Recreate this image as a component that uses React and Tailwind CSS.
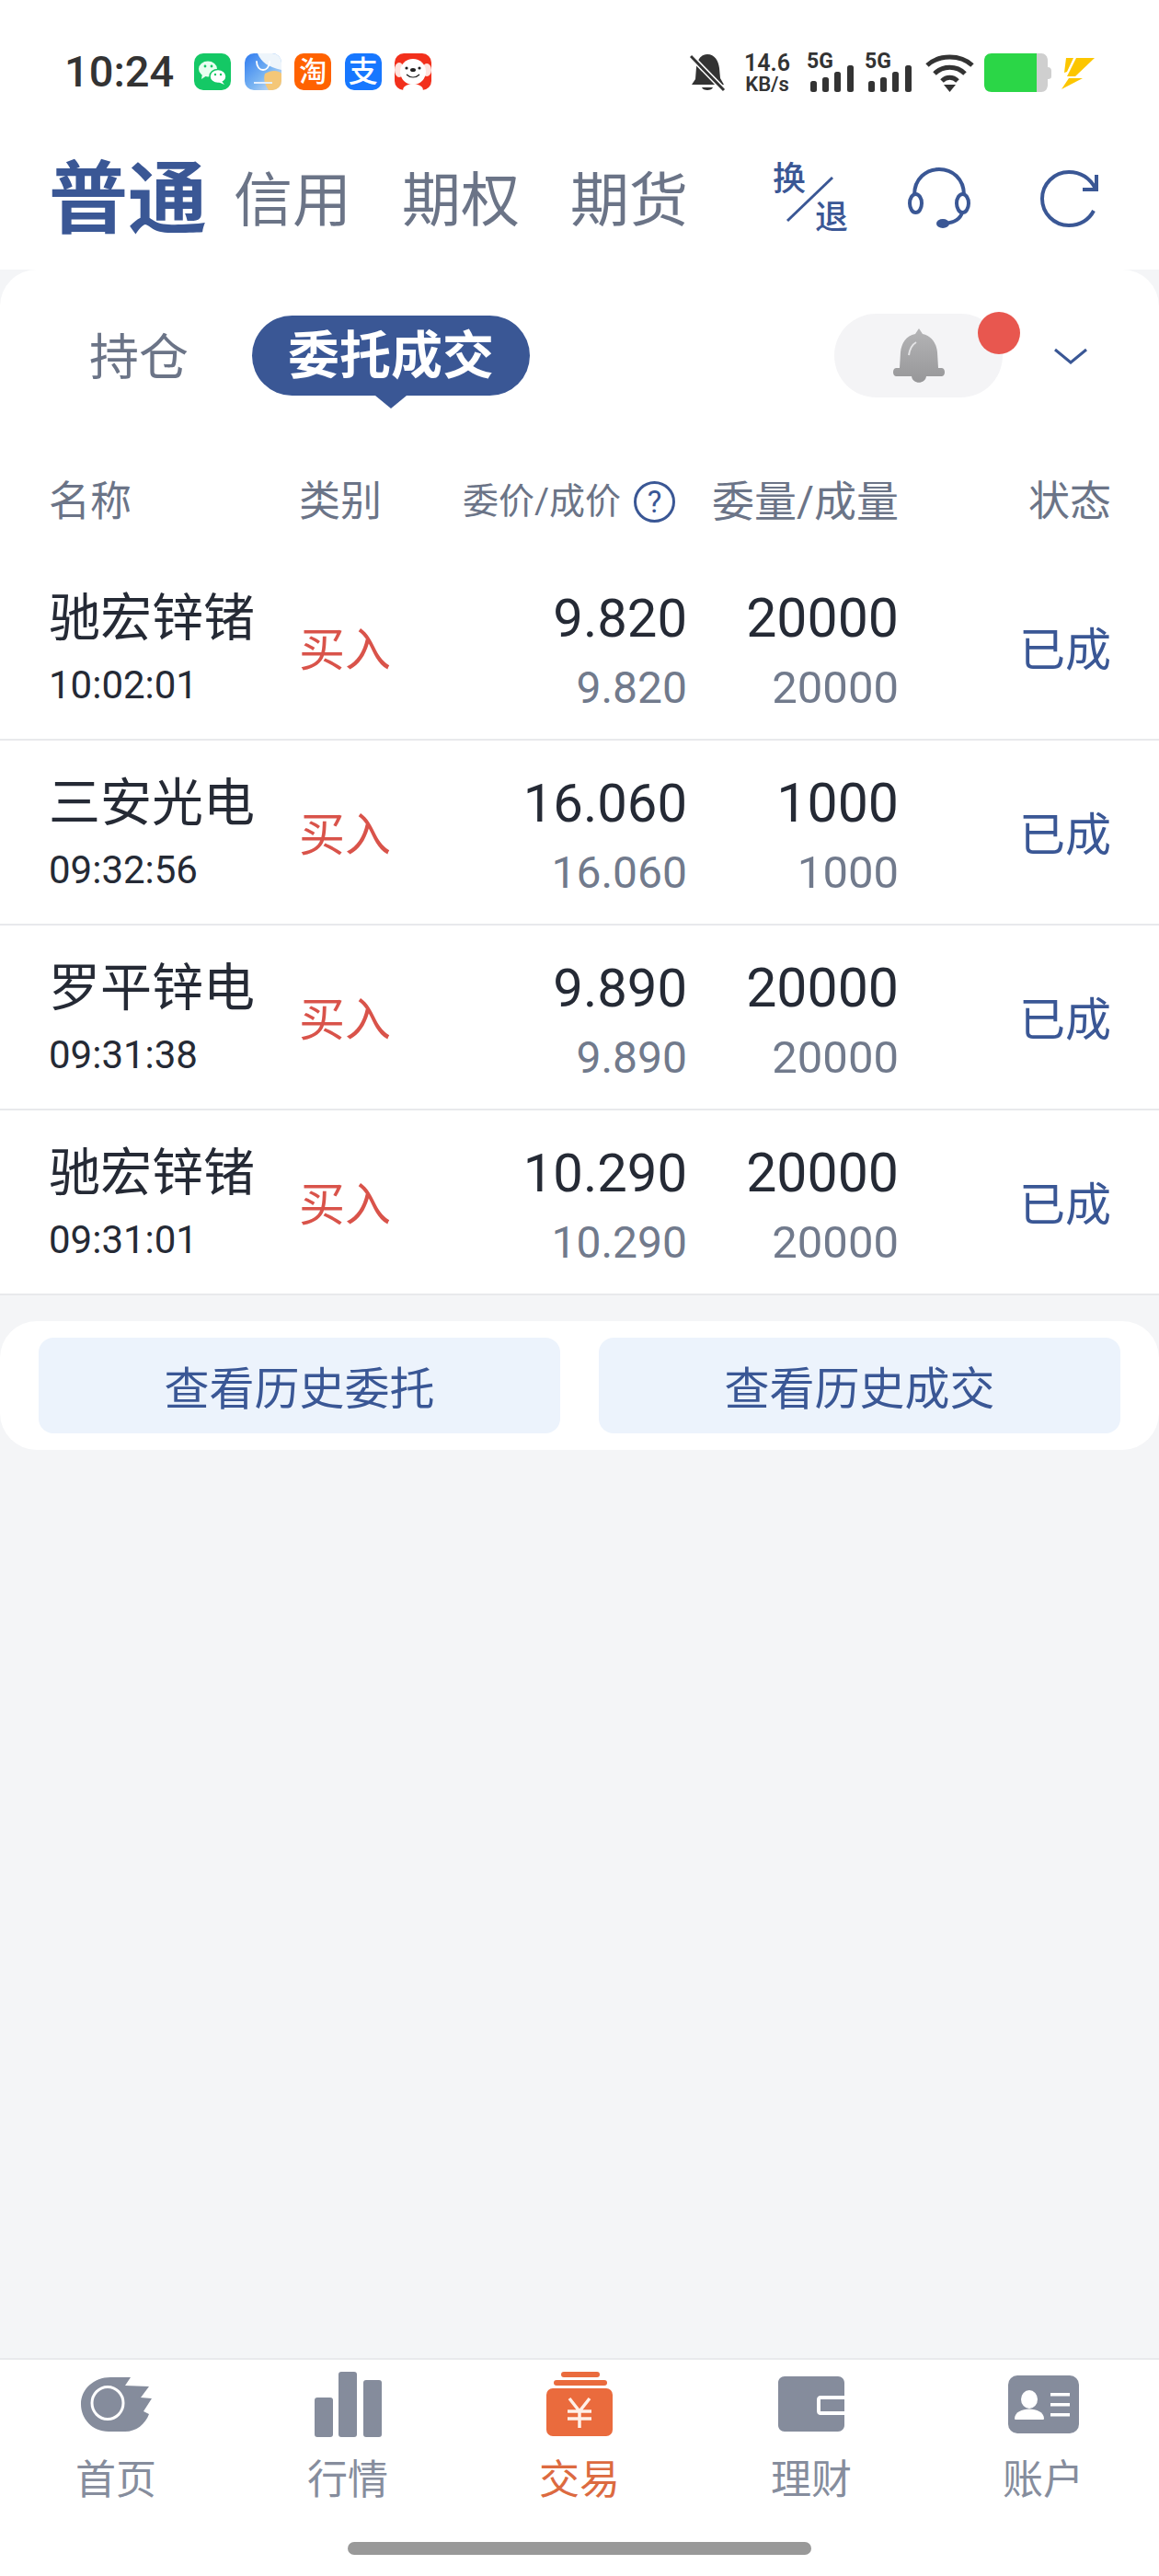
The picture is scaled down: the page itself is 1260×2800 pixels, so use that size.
const BLUE = '#3a5795';

const rows = [
  { name: '驰宏锌锗', time: '10:02:01', price: '9.820', dealPrice: '9.820', qty: '20000', dealQty: '20000' },
  { name: '三安光电', time: '09:32:56', price: '16.060', dealPrice: '16.060', qty: '1000', dealQty: '1000' },
  { name: '罗平锌电', time: '09:31:38', price: '9.890', dealPrice: '9.890', qty: '20000', dealQty: '20000' },
  { name: '驰宏锌锗', time: '09:31:01', price: '10.290', dealPrice: '10.290', qty: '20000', dealQty: '20000' },
];

function AppIcons() {
  return (
    <div className="flex gap-[14.5px] ml-[22px]">
      <div className="w-10 h-10 rounded-[10px] bg-[#14c865] overflow-hidden">
        <svg width="40" height="40" viewBox="0 0 40 40">
          <ellipse cx="15" cy="17" rx="10" ry="8.5" fill="#e8fff1" />
          <path d="M9 22 L8 28 L14 24Z" fill="#e8fff1" />
          <ellipse cx="26" cy="25" rx="9" ry="7.5" fill="#fff" stroke="#14c865" strokeWidth="1.5" />
          <path d="M30 30 L33 34 L26 31Z" fill="#fff" />
          <circle cx="12" cy="14" r="1.4" fill="#14c865" />
          <circle cx="19" cy="14" r="1.4" fill="#14c865" />
          <circle cx="23" cy="23" r="1.2" fill="#14c865" />
          <circle cx="29" cy="23" r="1.2" fill="#14c865" />
        </svg>
      </div>
      <div className="w-10 h-10 rounded-[10px] overflow-hidden">
        <svg width="40" height="40" viewBox="0 0 40 40">
          <defs>
            <linearGradient id="storeBg" x1="0" y1="0" x2="1" y2="1">
              <stop offset="0" stopColor="#2f7bf0" />
              <stop offset="0.55" stopColor="#79b4f2" />
              <stop offset="1" stopColor="#dfe6f2" />
            </linearGradient>
          </defs>
          <rect width="40" height="40" fill="url(#storeBg)" />
          <path d="M14 0 C18 10 26 15 40 18 V0Z" fill="#eef5fb" />
          <path d="M22 22 C30 17 38 19 40 22 V40 H26 C22 34 20 28 22 22Z" fill="#f4c778" />
          <path d="M13 9 C13 21 27 21 27 9" fill="none" stroke="#fff" strokeWidth="1.8" strokeLinecap="round" />
          <rect x="10" y="31" width="20" height="2" fill="#e3efff" />
        </svg>
      </div>
      <div className="w-10 h-10 rounded-[10px] bg-[#ff6200] flex items-center justify-center text-white text-[30px] leading-none font-medium">淘</div>
      <div className="w-10 h-10 rounded-[10px] bg-[#1777ff] flex items-center justify-center text-white text-[32px] leading-none font-medium">支</div>
      <div className="w-10 h-10 rounded-[10px] bg-[#f2301c] overflow-hidden">
        <svg width="40" height="40" viewBox="0 0 40 40">
          <ellipse cx="5" cy="18" rx="5" ry="8" fill="#ffe3de" />
          <ellipse cx="35" cy="18" rx="5" ry="7" fill="#ffe3de" />
          <ellipse cx="20" cy="20" rx="14" ry="14" fill="#fff" />
          <path d="M9 40 C9 31 31 31 31 40Z" fill="#fff" />
          <circle cx="13" cy="16" r="1.6" fill="#222" />
          <circle cx="27" cy="16" r="1.6" fill="#222" />
          <ellipse cx="20" cy="18" rx="3" ry="2" fill="#222" />
          <path d="M13 23 C17 27 23 27 27 23" fill="none" stroke="#222" strokeWidth="1.2" />
        </svg>
      </div>
    </div>
  );
}

function Signal() {
  return (
    <div className="w-[52px] h-[42px]">
      <div className="text-[23px] leading-[17px] h-[17px] font-bold -ml-[1px]">5G</div>
      <svg className="block -mt-[4px]" width="52" height="29" viewBox="0 0 52 29">
        <rect x="3" y="17" width="7" height="12" rx="2.5" fill="#333" />
        <rect x="16" y="13" width="7" height="16" rx="2.5" fill="#333" />
        <rect x="29" y="7" width="7" height="22" rx="2.5" fill="#333" />
        <rect x="43" y="0" width="7" height="29" rx="2.5" fill="#333" />
      </svg>
    </div>
  );
}

function StatusBar() {
  return (
    <div className="flex items-start h-[100px] pt-[58px] pl-[70px] text-[#333]">
      <div className="text-[47px] leading-[40px] font-medium h-10">10:24</div>
      <AppIcons />
      <div className="ml-auto mr-[70px] flex items-start">
        <svg width="39" height="42" viewBox="0 0 39 42">
          <path d="M19 1 C27 1 31 8 32 16 L33 27 L37 34 H2 L6 28 L7 15 C8 7 12 1 19 1Z" fill="#333" />
          <path d="M13 37 H25 C24 41 14 41 13 37Z" fill="#333" />
          <path d="M2 4 L37 40" stroke="#fff" strokeWidth="6" />
          <path d="M1 3 L37 40" stroke="#333" strokeWidth="3" />
        </svg>
        <div className="ml-[19px] w-[52px] font-semibold text-center">
          <div className="text-[25px] leading-[22px] h-[25px]">14.6</div>
          <div className="text-[22px] leading-[18px]">KB/s</div>
        </div>
        <div className="ml-[18px]"><Signal /></div>
        <div className="ml-[11px]"><Signal /></div>
        <svg className="ml-[13px]" width="53" height="42" viewBox="0 0 53 42">
          <path d="M2 13 C15 1 38 1 51 13" fill="none" stroke="#333" strokeWidth="5" />
          <path d="M10 22 C19 13 34 13 43 22" fill="none" stroke="#333" strokeWidth="5" />
          <path d="M18 30 C23 25 30 25 35 30" fill="none" stroke="#333" strokeWidth="5" />
          <path d="M20 34 H33 L26.5 42Z" fill="#333" />
        </svg>
        <svg className="ml-[11px]" width="73" height="42" viewBox="0 0 73 42">
          <path d="M8 0 H57 V42 H8 C3 42 0 39 0 34 V8 C0 3 3 0 8 0Z" fill="#2bd647" />
          <path d="M57 0 H62 C66 0 69 3 69 8 V34 C69 39 66 42 62 42 H57Z" fill="#cfcfcf" />
          <path d="M69 15 C72 15 73 17 73 19 V25 C73 27 72 28 69 28Z" fill="#cfcfcf" />
        </svg>
        <svg className="ml-[11px] mt-1" width="36" height="35" viewBox="0 0 36 35">
          <path d="M5 1 H13 L6 16 L3 17Z" fill="#fcc600" />
          <path d="M16 1 H36 L15 21 H6 Z" fill="#fcc600" />
          <path d="M8 23 H23 L0 35Z" fill="#fcc600" />
        </svg>
      </div>
    </div>
  );
}

function NavBar() {
  return (
    <div className="flex items-center h-[116px] mt-[58px] pl-[53px]">
      <div className="pt-[4px] text-[86px] leading-none font-bold" style={{ color: BLUE }}>普通</div>
      <div className="flex gap-[55px] ml-[29px] pt-[6px] text-[64px] leading-none text-[#6b7487]">
        <span>信用</span>
        <span>期权</span>
        <span>期货</span>
      </div>
      <div className="relative w-[82px] h-[78px] ml-[92px] text-[36px] leading-none font-medium text-[#3a5795]">
        <span className="absolute left-0 top-0">换</span>
        <span className="absolute right-0 bottom-0">退</span>
        <svg className="absolute inset-0" width="82" height="78" viewBox="0 0 82 78">
          <path d="M16 63 L65 16" stroke="#3a5795" strokeWidth="3" />
        </svg>
      </div>
      <svg className="ml-[65px]" width="68" height="68" viewBox="0 0 68 68" fill="none" stroke="#3a5795" strokeWidth="4">
        <path d="M7 30 C7 12 20 2 34 2 C48 2 61 12 61 30" />
        <ellipse cx="8.5" cy="39" rx="6.5" ry="10" />
        <ellipse cx="59.5" cy="39" rx="6.5" ry="10" />
        <path d="M59 49 C57 56 50 60 40 61" />
        <ellipse cx="38" cy="61" rx="7" ry="5" fill="#3a5795" stroke="none" />
      </svg>
      <svg className="ml-[76px]" width="63" height="62" viewBox="0 0 63 62" fill="none" stroke="#3a5795" strokeWidth="4">
        <path d="M58 44 C53 54 43 60 31 60 C15 60 2 47 2 31 C2 15 15 2 31 2 C44 2 54 9 60 20" />
        <path d="M61 5 V21 H46" />
      </svg>
    </div>
  );
}

function Tabs() {
  return (
    <div className="flex items-center pt-[48px] pl-[97px] pr-[78px]">
      <span className="w-[108px] pt-[7px] text-[54px] leading-[84px] text-[#6b7487]">持仓</span>
      <div className="relative ml-[69px] w-[302px] h-[87px] rounded-full bg-[#3a5795] flex items-center justify-center text-white text-[56px] font-bold leading-none">
        委托成交
        <div className="absolute left-[134px] top-[87px] w-0 h-0 border-l-[17px] border-r-[17px] border-t-[14px] border-l-transparent border-r-transparent border-t-[#3a5795]" />
      </div>
      <div className="relative ml-auto w-[183px] h-[91px] rounded-full bg-[#f4f4f6] flex items-center justify-center">
        <svg width="56" height="59" viewBox="0 0 56 59">
          <defs>
            <linearGradient id="bellFill" x1="0" y1="0" x2="0" y2="1">
              <stop offset="0" stopColor="#b4b4b6" />
              <stop offset="1" stopColor="#979799" />
            </linearGradient>
          </defs>
          <path d="M28 0 L32 6 C42 8 47 16 48 26 L49 43 H53 C57 43 57 52 53 52 H36 C35 61 21 61 20 52 H3 C-1 52 -1 43 3 43 H7 L8 26 C9 16 14 8 24 6Z" fill="url(#bellFill)" />
          <path d="M17 29 C18 22 20 18 25 15" fill="none" stroke="#e4e4e6" strokeWidth="2" />
        </svg>
        <div className="absolute left-[156px] -top-[2px] w-[46px] h-[46px] rounded-full bg-[#e8574f]" />
      </div>
      <svg className="ml-14" width="36" height="18" viewBox="0 0 36 18">
        <path d="M1 2 L18 16 L35 2" fill="none" stroke="#3a5795" strokeWidth="3" />
      </svg>
    </div>
  );
}

function TableHead() {
  return (
    <div className="grid grid-cols-[272px_140px_282px_230px_231px] items-center h-[68px] mt-[79px] mb-[25px] pl-[53px] pr-[52px] text-[45px] leading-none text-[#6b7487]">
      <span>名称</span>
      <span>类别</span>
      <div className="flex items-center justify-end pr-[13px]">
        <span className="text-[39px]">委价/成价</span>
        <span className="ml-[14px] w-[45px] h-[45px] rounded-full border-[3px] border-[#3a5795] flex items-center justify-center text-[33px] text-[#3a5795] leading-none">?</span>
      </div>
      <span className="text-right text-[46px]">委量/成量</span>
      <span className="text-right">状态</span>
    </div>
  );
}

function OrderRow({ row }) {
  return (
    <div className="grid grid-cols-[272px_140px_282px_230px_231px] h-[201px] pl-[53px] pr-[52px] border-b-2 border-[#e8e9ec]">
      <div className="pt-[32px]">
        <div className="text-[56px] leading-[72px] text-[#252a35]">{row.name}</div>
        <div className="text-[42px] leading-[74px] text-[#252a35]">{row.time}</div>
      </div>
      <div className="self-center pt-[6px] text-[50px] leading-none text-[#d9534a]">买入</div>
      <div className="pt-[32px] text-right">
        <div className="text-[58px] leading-[72px] text-[#252a35]">{row.price}</div>
        <div className="text-[48px] leading-[80px] text-[#717a8c]">{row.dealPrice}</div>
      </div>
      <div className="pt-[32px] text-right">
        <div className="text-[59px] leading-[72px] text-[#252a35]">{row.qty}</div>
        <div className="text-[49px] leading-[80px] text-[#717a8c]">{row.dealQty}</div>
      </div>
      <div className="self-center pt-[6px] text-right text-[50px] leading-none text-[#3a5795]">已成</div>
    </div>
  );
}

function TabItem({ label, active, children }) {
  return (
    <div className="flex flex-col items-center">
      <div className="h-[86px] flex items-center justify-center">{children}</div>
      <span className={`mt-[18px] text-[44px] leading-none ${active ? 'text-[#dc6a40]' : 'text-[#868d9d]'}`}>{label}</span>
    </div>
  );
}

function BottomBar() {
  const gray = '#858c9c';
  return (
    <div className="h-[237px] shrink-0 bg-white border-t-2 border-[#e8e9ec] flex flex-col">
      <div className="grid grid-cols-5 pt-[5px]">
        <TabItem label="首页">
          <svg width="77" height="60" viewBox="0 0 77 60">
            <path d="M32 1 H54 L48 10 L74 11 L65 23 L77 24 L68 38 L74 41 C70 52 60 60 48 60 H30 C12 60 0 46 0 30 C0 14 14 1 32 1Z" fill={gray} />
            <ellipse cx="29" cy="29" rx="17" ry="17.5" fill="none" stroke="#fff" strokeWidth="3" />
          </svg>
        </TabItem>
        <TabItem label="行情">
          <svg width="73" height="71" viewBox="0 0 73 71">
            <rect x="0" y="28" width="20" height="43" rx="3" fill={gray} />
            <rect x="26" y="0" width="20" height="71" rx="3" fill={gray} />
            <rect x="53" y="9" width="20" height="62" rx="3" fill={gray} />
          </svg>
        </TabItem>
        <TabItem label="交易" active>
          <svg width="72" height="70" viewBox="0 0 72 70">
            <rect x="16" y="0" width="42" height="6" rx="3" fill="#ea6b3d" />
            <rect x="8" y="9" width="58" height="6" rx="3" fill="#ea6b3d" />
            <rect x="0" y="18" width="72" height="52" rx="7" fill="#ea6b3d" />
            <path d="M25 29 L36 43 L47 29 M23 43 H49 M23 51 H49 M36 43 V61" fill="none" stroke="#fff0e8" strokeWidth="3.5" />
          </svg>
        </TabItem>
        <TabItem label="理财">
          <svg width="72" height="60" viewBox="0 0 72 60">
            <path d="M7 0 H65 C69 0 72 3 72 7 V21 H47 C43 21 42 23 42 26 V37 C42 40 43 42 47 42 H72 V53 C72 57 69 60 65 60 H7 C3 60 0 57 0 53 V7 C0 3 3 0 7 0Z" fill={gray} />
            <rect x="46" y="25" width="26" height="13" fill={gray} />
          </svg>
        </TabItem>
        <TabItem label="账户">
          <svg width="77" height="63" viewBox="0 0 77 63">
            <rect width="77" height="63" rx="10" fill={gray} />
            <ellipse cx="23" cy="26" rx="9" ry="10" fill="#fff" />
            <path d="M7 47 C7 33 39 33 39 47 C39 48 38 48 36 48 H10 C8 48 7 48 7 47Z" fill="#fff" />
            <rect x="46" y="19" width="21" height="3.5" fill="#fff" />
            <rect x="46" y="30" width="21" height="3.5" fill="#fff" />
            <rect x="46" y="41" width="21" height="3.5" fill="#fff" />
          </svg>
        </TabItem>
      </div>
      <div className="mt-[45px] mx-auto w-[504px] h-[14px] rounded-full bg-[#999]" />
    </div>
  );
}

export default function App() {
  return (
    <div className="w-[1260px] h-[2800px] flex flex-col bg-[#f4f5f7] font-[Roboto,'Noto_Sans_CJK_SC',sans-serif]">
      <div className="h-[293px] shrink-0 bg-white">
        <StatusBar />
        <NavBar />
      </div>

      <div className="bg-white rounded-t-[40px]">
        <Tabs />
        <TableHead />
        {rows.map((row, i) => (
          <OrderRow key={i} row={row} />
        ))}
      </div>

      <div className="mt-[28px] h-[140px] rounded-[40px] bg-white flex gap-[42px] px-[42px] py-[18px]">
        <button className="flex-1 h-[104px] pt-[8px] rounded-[16px] bg-[#ecf3fc] text-[49px] leading-none text-[#3a5795]">查看历史委托</button>
        <button className="flex-1 h-[104px] pt-[8px] rounded-[16px] bg-[#ecf3fc] text-[49px] leading-none text-[#3a5795]">查看历史成交</button>
      </div>

      <div className="flex-1" />
      <BottomBar />
    </div>
  );
}
